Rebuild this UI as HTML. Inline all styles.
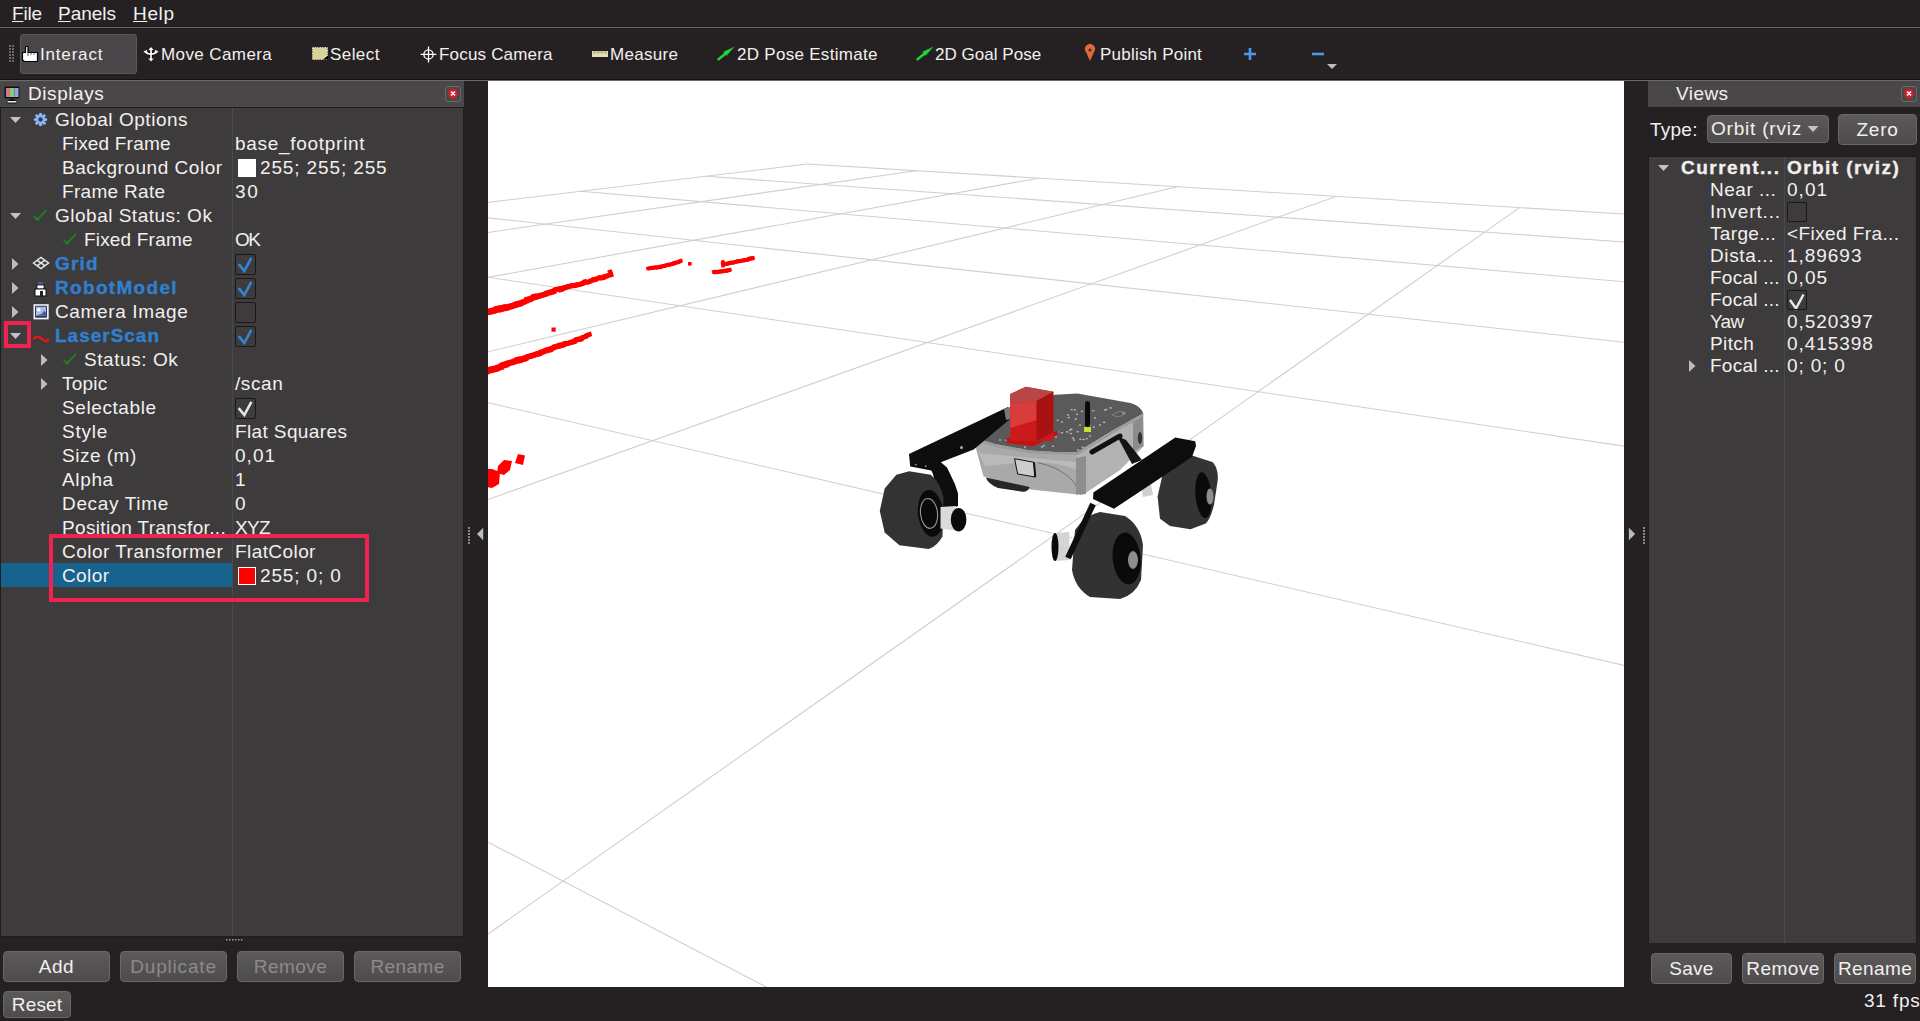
<!DOCTYPE html><html><head><meta charset="utf-8"><style>
*{margin:0;padding:0;box-sizing:border-box}
html,body{width:1920px;height:1021px;overflow:hidden;background:#252123;font-family:"Liberation Sans",sans-serif;color:#f2f0ee}
.a{position:absolute}
.t{position:absolute;white-space:nowrap;font-size:20px;line-height:24px;padding-top:1px}
.tb{position:absolute;white-space:nowrap;font-size:17.6px;line-height:20px;top:45px}
.b{font-weight:bold;-webkit-text-stroke:0.35px currentColor}
.blue{color:#3180d0}
.cb{position:absolute;width:21px;height:21px;border:1.6px solid #1a1819;border-radius:2px}
.btn{position:absolute;border:1px solid #6a6769;border-radius:4px;background:linear-gradient(#5c595b,#4e4b4d);text-align:center;font-size:20px}
.dis{color:#8d8a8b}
svg{position:absolute;overflow:visible}
</style></head><body>
<div class="t" style="font-size:19px;letter-spacing:-0.163px;left:12px;top:1px"><u>F</u>ile</div>
<div class="t" style="font-size:19px;letter-spacing:-0.030px;left:58px;top:1px"><u>P</u>anels</div>
<div class="t" style="font-size:19px;letter-spacing:0.654px;left:133px;top:1px"><u>H</u>elp</div>
<div class="a" style="left:0;top:26px;width:1920px;height:1px;background:#1d191a"></div>
<div class="a" style="left:0;top:27px;width:1920px;height:1px;background:#6f6b6c"></div>
<div class="a" style="left:0;top:28px;width:1920px;height:1px;background:#1d191a"></div>
<svg style="left:0;top:0" width="20" height="80"><rect x="9" y="45" width="2" height="2" fill="#6b686a"/><rect x="12" y="45" width="2" height="2" fill="#6b686a"/><rect x="9" y="48" width="2" height="2" fill="#6b686a"/><rect x="12" y="48" width="2" height="2" fill="#6b686a"/><rect x="9" y="51" width="2" height="2" fill="#6b686a"/><rect x="12" y="51" width="2" height="2" fill="#6b686a"/><rect x="9" y="54" width="2" height="2" fill="#6b686a"/><rect x="12" y="54" width="2" height="2" fill="#6b686a"/><rect x="9" y="57" width="2" height="2" fill="#6b686a"/><rect x="12" y="57" width="2" height="2" fill="#6b686a"/><rect x="9" y="60" width="2" height="2" fill="#6b686a"/><rect x="12" y="60" width="2" height="2" fill="#6b686a"/></svg>
<div class="a" style="left:20px;top:34px;width:117px;height:40px;background:#49464a;border:1px solid #5b585a;border-radius:3px"></div>
<div class="tb" style="font-size:17px;letter-spacing:0.819px;left:40px">Interact</div>
<div class="tb" style="font-size:17px;letter-spacing:0.402px;left:161px">Move Camera</div>
<div class="tb" style="font-size:17px;letter-spacing:0.422px;left:330px">Select</div>
<div class="tb" style="font-size:17px;letter-spacing:0.190px;left:439px">Focus Camera</div>
<div class="tb" style="font-size:17px;letter-spacing:0.309px;left:610px">Measure</div>
<div class="tb" style="font-size:17px;letter-spacing:0.289px;left:737px">2D Pose Estimate</div>
<div class="tb" style="font-size:17px;letter-spacing:0.029px;left:935px">2D Goal Pose</div>
<div class="tb" style="font-size:17px;letter-spacing:0.218px;left:1100px">Publish Point</div>
<svg style="left:0;top:0" width="1920" height="80"><path d="M25.5 46.5 h2.5 v6 h9.5 v9 h-13 l-2 -1.5 v-7.5 h3 z" fill="#fff" stroke="#000" stroke-width="1.2" stroke-linejoin="round"/><path d="M28 52.5 v3.5 M31 52.5 v2.5 M34 52.5 v2.5" stroke="#333" stroke-width="0.8"/><g stroke="#000" stroke-width="3.4" fill="none" stroke-opacity="0.8"><path d="M151 49.5 V59.5 M145 52 Q151 56.5 157 52"/></g><path d="M151 46.8 l-3.3 3.5 h6.6z M151 61.8 l-3.3 -3.5 h6.6z M142.8 51.6 l4.4 -2.2 l0.3 4.6z M159.2 51.6 l-4.4 -2.2 l-0.3 4.6z" fill="#fff" stroke="#000" stroke-width="0.8" stroke-opacity="0.6"/><g stroke="#fff" stroke-width="1.7" fill="none"><path d="M151 49.5 V59.5 M145 52 Q151 56.5 157 52"/></g><rect x="312.5" y="47.5" width="15" height="12" fill="#d8d49a" stroke="#ece8c0" stroke-dasharray="1 1.5"/><path d="M323 59.5 h5 v-4 z" fill="#000"/><g stroke="#fff" stroke-width="1.3" fill="none"><circle cx="428.5" cy="54.4" r="4.6"/><path d="M428.5 46.4 v16 M420.6 54.4 h15.8"/></g><rect x="592" y="51" width="16" height="6" fill="#e6dfb4"/><path d="M594 51v3M596 51v2M598 51v3M600 51v2M602 51v3M604 51v2M606 51v3" stroke="#8a8460" stroke-width="0.7"/><path d="M718.50 59.3 L726.00 53.2" stroke="#1ed838" stroke-width="2.4" stroke-linecap="round"/><polygon points="726.44,55.45 733.75,47.3 723.74,51.97" fill="#1ed838" stroke="#1ed838" stroke-width="0.5" stroke-linejoin="round"/><path d="M917.50 59.3 L925.00 53.2" stroke="#1ed838" stroke-width="2.4" stroke-linecap="round"/><polygon points="925.44,55.45 932.75,47.3 922.74,51.97" fill="#1ed838" stroke="#1ed838" stroke-width="0.5" stroke-linejoin="round"/><path d="M1090 61 L1086 52 A5 5 0 1 1 1094 52 Z" fill="#dc6a3f"/><circle cx="1090" cy="50" r="1.6" fill="#5a2010"/><path d="M1250 48v12M1244 54h12" stroke="#4a9ae8" stroke-width="2.6"/><path d="M1312 54h12" stroke="#4a9ae8" stroke-width="2.6"/><path d="M1327 64h10l-5 5z" fill="#bdbbbc"/></svg>
<div class="a" style="left:0;top:79px;width:1920px;height:1px;background:#161213"></div>
<div class="a" style="left:0;top:80px;width:1920px;height:1px;background:#6d6a6b"></div>
<div class="a" style="left:0;top:81px;width:464px;height:26px;background:#4a4748"></div>
<svg style="left:0;top:0" width="40" height="110"><rect x="4.5" y="86.5" width="15" height="12" fill="#111" rx="1"/><rect x="6" y="88" width="4" height="9" fill="#d07a85"/><rect x="10" y="88" width="4.5" height="9" fill="#7fcf7a"/><rect x="14.5" y="88" width="4" height="9" fill="#9aa0e8"/><rect x="10" y="99" width="4" height="2" fill="#111"/><rect x="7" y="100.5" width="10" height="2.5" rx="1" fill="#eee" stroke="#111" stroke-width="1"/></svg>
<div class="t" style="font-size:19px;letter-spacing:0.562px;left:28px;top:81px">Displays</div>
<div class="a" style="left:445px;top:86px;width:16px;height:16px;border:1px solid #6b686a;border-radius:3px;background:#4a4748"></div>
<svg style="left:0;top:0" width="470" height="110"><circle cx="453" cy="93.5" r="5" fill="#d41c26"/><path d="M451 91.5l4 4M455 91.5l-4 4" stroke="#fff" stroke-width="1.5"/></svg>
<div class="a" style="left:0;top:107px;width:464px;height:830px;background:#1e1c1d"></div>
<div class="a" style="left:1px;top:108px;width:462px;height:828px;background:#3d3b3c"></div>
<div class="a" style="left:232px;top:108px;width:1px;height:828px;background:#4a4849"></div>
<div class="a" style="left:1px;top:563px;width:231px;height:24px;background:#17628f"></div>
<div class="t " style="font-size:19px;letter-spacing:0.533px;left:55px;top:107px">Global Options</div>
<div class="t " style="font-size:19px;letter-spacing:0.182px;left:62px;top:131px">Fixed Frame</div>
<div class="t" style="font-size:19px;letter-spacing:0.709px;left:235px;top:131px">base_footprint</div>
<div class="t " style="font-size:19px;letter-spacing:0.535px;left:62px;top:155px">Background Color</div>
<div class="t" style="font-size:19px;letter-spacing:0.870px;left:260px;top:155px">255; 255; 255</div>
<div class="t " style="font-size:19px;letter-spacing:0.309px;left:62px;top:179px">Frame Rate</div>
<div class="t" style="font-size:19px;letter-spacing:1.773px;left:235px;top:179px">30</div>
<div class="t " style="font-size:19px;letter-spacing:0.499px;left:55px;top:203px">Global Status: Ok</div>
<div class="t " style="font-size:19px;letter-spacing:0.182px;left:84px;top:227px">Fixed Frame</div>
<div class="t" style="font-size:19px;letter-spacing:-1.480px;left:235px;top:227px">OK</div>
<div class="t b blue" style="font-size:19px;letter-spacing:1.216px;left:55px;top:251px">Grid</div>
<div class="t b blue" style="font-size:19px;letter-spacing:1.320px;left:55px;top:275px">RobotModel</div>
<div class="t " style="font-size:19px;letter-spacing:0.643px;left:55px;top:299px">Camera Image</div>
<div class="t b blue" style="font-size:19px;letter-spacing:0.988px;left:55px;top:323px">LaserScan</div>
<div class="t " style="font-size:19px;letter-spacing:0.560px;left:84px;top:347px">Status: Ok</div>
<div class="t " style="font-size:19px;letter-spacing:0.230px;left:62px;top:371px">Topic</div>
<div class="t" style="font-size:19px;letter-spacing:0.592px;left:235px;top:371px">/scan</div>
<div class="t " style="font-size:19px;letter-spacing:0.593px;left:62px;top:395px">Selectable</div>
<div class="t " style="font-size:19px;letter-spacing:0.743px;left:62px;top:419px">Style</div>
<div class="t" style="font-size:19px;letter-spacing:0.382px;left:235px;top:419px">Flat Squares</div>
<div class="t " style="font-size:19px;letter-spacing:0.504px;left:62px;top:443px">Size (m)</div>
<div class="t" style="font-size:19px;letter-spacing:1.035px;left:235px;top:443px">0,01</div>
<div class="t " style="font-size:19px;letter-spacing:0.647px;left:62px;top:467px">Alpha</div>
<div class="t" style="font-size:19px;letter-spacing:0.000px;left:235px;top:467px">1</div>
<div class="t " style="font-size:19px;letter-spacing:0.665px;left:62px;top:491px">Decay Time</div>
<div class="t" style="font-size:19px;letter-spacing:0.000px;left:235px;top:491px">0</div>
<div class="t " style="font-size:19px;letter-spacing:0.332px;left:62px;top:515px">Position Transfor...</div>
<div class="t" style="font-size:19px;letter-spacing:-0.646px;left:235px;top:515px">XYZ</div>
<div class="t " style="font-size:19px;letter-spacing:0.478px;left:62px;top:539px">Color Transformer</div>
<div class="t" style="font-size:19px;letter-spacing:0.421px;left:235px;top:539px">FlatColor</div>
<div class="t " style="font-size:19px;letter-spacing:0.399px;left:62px;top:563px">Color</div>
<div class="t" style="font-size:19px;letter-spacing:0.861px;left:260px;top:563px">255; 0; 0</div>
<svg style="left:0;top:0" width="470" height="940"><path d="M10 117 h11 l-5.5 6 z" fill="#c4c2c3"/><path d="M10 213 h11 l-5.5 6 z" fill="#c4c2c3"/><path d="M12 258 v12 l6.5 -6 z" fill="#bdbbbc"/><path d="M12 282 v12 l6.5 -6 z" fill="#bdbbbc"/><path d="M12 306 v12 l6.5 -6 z" fill="#bdbbbc"/><path d="M10 333 h11 l-5.5 6 z" fill="#c4c2c3"/><path d="M41 354 v12 l6.5 -6 z" fill="#bdbbbc"/><path d="M41 378 v12 l6.5 -6 z" fill="#bdbbbc"/><g fill="#8bb8ee"><circle cx="45.70" cy="119.50" r="1.6"/><circle cx="44.18" cy="123.18" r="1.6"/><circle cx="40.50" cy="124.70" r="1.6"/><circle cx="36.82" cy="123.18" r="1.6"/><circle cx="35.30" cy="119.50" r="1.6"/><circle cx="36.82" cy="115.82" r="1.6"/><circle cx="40.50" cy="114.30" r="1.6"/><circle cx="44.18" cy="115.82" r="1.6"/><circle cx="40.5" cy="119.5" r="4.6"/></g><circle cx="40.5" cy="119.5" r="2.2" fill="#23407a"/><path d="M34.3 216.7 L37.5 219.5 L46 210.5" stroke="#207c24" stroke-width="1.9" fill="none" stroke-linecap="round"/><circle cx="37.5" cy="218.9" r="1.9" fill="#207c24"/><path d="M64 240.4 L67.2 243.2 L75.7 234.2" stroke="#207c24" stroke-width="1.9" fill="none" stroke-linecap="round"/><circle cx="67.2" cy="242.6" r="1.9" fill="#207c24"/><path d="M64 360.4 L67.2 363.2 L75.7 354.2" stroke="#207c24" stroke-width="1.9" fill="none" stroke-linecap="round"/><circle cx="67.2" cy="362.6" r="1.9" fill="#207c24"/><g transform="translate(41 263)" stroke="#e8e8e8" stroke-width="1.5" fill="none"><path d="M-7.5 0 L0 -5.5 L7.5 0 L0 5.5 Z"/><path d="M-3.7 -2.7 L3.7 2.7 M3.7 -2.7 L-3.7 2.7"/></g><g transform="translate(33 281)"><rect x="5" y="1" width="5" height="3" fill="#4455aa"/><rect x="4" y="4" width="7" height="4" fill="#fff" stroke="#111" stroke-width="0.8"/><rect x="2" y="8" width="11" height="7" fill="#fff" stroke="#111" stroke-width="1"/><rect x="7" y="10" width="3" height="5" fill="#222"/></g><g><rect x="33.5" y="304.2" width="15.2" height="15.2" fill="#f4f4f4"/><rect x="35" y="305.8" width="12" height="12" rx="1" fill="#2a3a78"/><rect x="36" y="306.8" width="10" height="9" fill="#a8bce0"/><circle cx="38.8" cy="309.7" r="1.8" fill="#fff"/><path d="M36 315.8 h10 v-3 l-2 -2 l-2 3 z" fill="#4a5c98"/></g><path d="M34 338.5 q2.5 -2.5 5 -1.5 l5 3.5 q2.5 1.5 4 -1" stroke="#e81515" stroke-width="2.6" fill="none" stroke-linecap="round"/></svg>
<div class="cb" style="left:235px;top:254px"></div>
<svg style="left:0;top:0" width="300" height="600"><path d="M238.7 264.2 L244.3 271 L251.4 257.8" stroke="#3585d8" stroke-width="2.6" fill="none"/></svg>
<div class="cb" style="left:235px;top:278px"></div>
<svg style="left:0;top:0" width="300" height="600"><path d="M238.7 288.2 L244.3 295 L251.4 281.8" stroke="#3585d8" stroke-width="2.6" fill="none"/></svg>
<div class="cb" style="left:235px;top:302px"></div>
<div class="cb" style="left:235px;top:326px"></div>
<svg style="left:0;top:0" width="300" height="600"><path d="M238.7 336.2 L244.3 343 L251.4 329.8" stroke="#3585d8" stroke-width="2.6" fill="none"/></svg>
<div class="cb" style="left:235px;top:398px"></div>
<svg style="left:0;top:0" width="300" height="600"><path d="M238.7 408.2 L244.3 415 L251.4 401.8" stroke="#e6e6e6" stroke-width="2.6" fill="none"/></svg>
<div class="a" style="left:238px;top:159px;width:18px;height:18px;background:#fff"></div>
<div class="a" style="left:238px;top:567px;width:18px;height:18px;background:#f00;border:1.5px solid #fff"></div>
<div class="a" style="left:4px;top:321px;width:27px;height:27px;border:4px solid #f02350"></div>
<div class="a" style="left:49px;top:534px;width:320px;height:68px;border:4px solid #f02350"></div>
<svg style="left:0;top:0" width="480" height="950"><g fill="#9a9899"><rect x="226" y="939" width="1.5" height="1.5"/><rect x="229" y="939" width="1.5" height="1.5"/><rect x="232" y="939" width="1.5" height="1.5"/><rect x="235" y="939" width="1.5" height="1.5"/><rect x="238" y="939" width="1.5" height="1.5"/><rect x="241" y="939" width="1.5" height="1.5"/></g><g fill="#8a8889"><rect x="468" y="527" width="2" height="2"/><rect x="468" y="530" width="2" height="2"/><rect x="468" y="533" width="2" height="2"/><rect x="468" y="536" width="2" height="2"/><rect x="468" y="539" width="2" height="2"/><rect x="468" y="542" width="2" height="2"/></g><path d="M483.2 527.8 v12.4 l-6.2 -6.2z" fill="#bdbbbc"/></svg>
<svg style="left:488px;top:81px;background:#fff;overflow:hidden" width="1136" height="906"><g stroke="#cfcfd1" stroke-width="1.1"><line x1="319.2" y1="83.0" x2="2646.1" y2="225.4"/><line x1="319.2" y1="83.0" x2="-36297.6" y2="4490.5"/><line x1="218.3" y1="95.2" x2="3041.4" y2="297.7"/><line x1="427.9" y1="89.7" x2="-632888.9" y2="91471.9"/><line x1="93.0" y1="110.3" x2="3749.9" y2="427.3"/><line x1="550.3" y1="97.2" x2="-506838.8" y2="91471.9"/><line x1="-66.9" y1="129.5" x2="5388.1" y2="726.9"/><line x1="689.2" y1="105.7" x2="-380788.6" y2="91471.9"/><line x1="-278.0" y1="154.9" x2="13277.6" y2="2169.8"/><line x1="848.0" y1="115.4" x2="-254738.5" y2="91471.9"/><line x1="-569.3" y1="190.0" x2="394124.8" y2="91471.9"/><line x1="1031.5" y1="126.6" x2="-128688.3" y2="91471.9"/><line x1="-997.6" y1="241.5" x2="174176.2" y2="91471.9"/><line x1="1245.8" y1="139.7" x2="-2638.1" y2="91471.9"/><line x1="-1689.0" y1="324.7" x2="-45772.5" y2="91471.9"/><line x1="1499.5" y1="155.3" x2="123412.0" y2="91471.9"/><line x1="-2993.6" y1="481.8" x2="-265721.1" y2="91471.9"/><line x1="1804.4" y1="173.9" x2="249462.2" y2="91471.9"/><line x1="-6377.3" y1="889.1" x2="-485669.7" y2="91471.9"/><line x1="2177.9" y1="196.8" x2="375512.3" y2="91471.9"/><line x1="-36297.6" y1="4490.5" x2="-705618.3" y2="91471.9"/><line x1="2646.1" y1="225.4" x2="501562.5" y2="91471.9"/></g><g transform="translate(-488 -81)" fill="#ff0000">
<rect x="482.9" y="309.0" width="6.2" height="6.2" transform="rotate(-15 486.0 312.5)"/>
<rect x="485.0" y="309.0" width="6.2" height="6.2" transform="rotate(-15 488.1 312.0)"/>
<rect x="487.1" y="308.2" width="6.1" height="6.1" transform="rotate(-15 490.2 311.5)"/>
<rect x="489.2" y="308.0" width="6.1" height="6.1" transform="rotate(-15 492.3 310.9)"/>
<rect x="491.3" y="307.6" width="6.1" height="6.1" transform="rotate(-15 494.4 310.4)"/>
<rect x="493.4" y="306.2" width="6.0" height="6.0" transform="rotate(-15 496.4 309.9)"/>
<rect x="495.5" y="305.6" width="6.0" height="6.0" transform="rotate(-15 498.5 309.4)"/>
<rect x="497.5" y="306.4" width="6.0" height="6.0" transform="rotate(-15 500.5 308.9)"/>
<rect x="499.6" y="305.0" width="5.9" height="5.9" transform="rotate(-15 502.5 308.3)"/>
<rect x="501.6" y="304.4" width="5.9" height="5.9" transform="rotate(-15 504.5 307.8)"/>
<rect x="503.6" y="305.1" width="5.9" height="5.9" transform="rotate(-15 506.5 307.3)"/>
<rect x="505.6" y="303.8" width="5.8" height="5.8" transform="rotate(-15 508.5 306.7)"/>
<rect x="507.6" y="303.9" width="5.8" height="5.8" transform="rotate(-15 510.5 306.2)"/>
<rect x="509.6" y="302.8" width="5.8" height="5.8" transform="rotate(-15 512.5 305.7)"/>
<rect x="511.5" y="302.5" width="5.8" height="5.8" transform="rotate(-15 514.4 305.2)"/>
<rect x="513.5" y="301.2" width="5.7" height="5.7" transform="rotate(-15 516.4 304.7)"/>
<rect x="515.4" y="301.4" width="5.7" height="5.7" transform="rotate(-15 518.2 304.0)"/>
<rect x="517.2" y="301.0" width="5.7" height="5.7" transform="rotate(-15 520.1 303.2)"/>
<rect x="519.1" y="299.7" width="5.6" height="5.6" transform="rotate(-15 521.9 302.5)"/>
<rect x="520.9" y="299.3" width="5.6" height="5.6" transform="rotate(-15 523.7 301.7)"/>
<rect x="522.7" y="298.4" width="5.6" height="5.6" transform="rotate(-15 525.5 300.9)"/>
<rect x="524.6" y="296.7" width="5.5" height="5.5" transform="rotate(-15 527.3 300.2)"/>
<rect x="526.4" y="297.1" width="5.5" height="5.5" transform="rotate(-15 529.1 299.4)"/>
<rect x="528.2" y="296.1" width="5.5" height="5.5" transform="rotate(-15 530.9 298.7)"/>
<rect x="529.9" y="294.9" width="5.5" height="5.5" transform="rotate(-15 532.7 298.0)"/>
<rect x="531.7" y="293.8" width="5.4" height="5.4" transform="rotate(-15 534.4 297.2)"/>
<rect x="533.5" y="294.5" width="5.4" height="5.4" transform="rotate(-15 536.2 296.6)"/>
<rect x="535.3" y="293.3" width="5.4" height="5.4" transform="rotate(-15 538.0 296.0)"/>
<rect x="537.1" y="293.1" width="5.3" height="5.3" transform="rotate(-15 539.8 295.4)"/>
<rect x="538.9" y="292.8" width="5.3" height="5.3" transform="rotate(-15 541.6 294.9)"/>
<rect x="540.7" y="292.0" width="5.3" height="5.3" transform="rotate(-15 543.3 294.3)"/>
<rect x="542.5" y="291.8" width="5.2" height="5.2" transform="rotate(-15 545.1 293.7)"/>
<rect x="544.2" y="290.4" width="5.2" height="5.2" transform="rotate(-15 546.8 293.2)"/>
<rect x="546.0" y="290.5" width="5.2" height="5.2" transform="rotate(-15 548.6 292.6)"/>
<rect x="547.7" y="289.4" width="5.2" height="5.2" transform="rotate(-15 550.3 292.0)"/>
<rect x="549.5" y="289.6" width="5.1" height="5.1" transform="rotate(-15 552.0 291.5)"/>
<rect x="551.2" y="289.0" width="5.1" height="5.1" transform="rotate(-15 553.7 290.9)"/>
<rect x="552.9" y="287.2" width="5.1" height="5.1" transform="rotate(-15 555.4 290.4)"/>
<rect x="554.6" y="286.8" width="5.1" height="5.1" transform="rotate(-15 557.2 289.9)"/>
<rect x="556.3" y="286.5" width="5.0" height="5.0" transform="rotate(-15 558.9 289.4)"/>
<rect x="558.1" y="287.2" width="5.0" height="5.0" transform="rotate(-15 560.6 288.9)"/>
<rect x="559.8" y="285.9" width="5.0" height="5.0" transform="rotate(-15 562.2 288.5)"/>
<rect x="561.4" y="285.7" width="4.9" height="4.9" transform="rotate(-15 563.9 288.0)"/>
<rect x="563.1" y="284.8" width="4.9" height="4.9" transform="rotate(-15 565.6 287.5)"/>
<rect x="564.8" y="284.6" width="4.9" height="4.9" transform="rotate(-15 567.2 287.1)"/>
<rect x="566.5" y="284.0" width="4.9" height="4.9" transform="rotate(-15 568.9 286.6)"/>
<rect x="568.1" y="283.5" width="4.8" height="4.8" transform="rotate(-15 570.5 286.1)"/>
<rect x="569.8" y="283.4" width="4.8" height="4.8" transform="rotate(-15 572.2 285.7)"/>
<rect x="571.4" y="283.0" width="4.8" height="4.8" transform="rotate(-15 573.8 285.2)"/>
<rect x="573.0" y="283.1" width="4.8" height="4.8" transform="rotate(-15 575.4 284.8)"/>
<rect x="574.6" y="282.3" width="4.7" height="4.7" transform="rotate(-15 577.0 284.3)"/>
<rect x="576.3" y="282.2" width="4.7" height="4.7" transform="rotate(-15 578.6 283.9)"/>
<rect x="577.9" y="281.7" width="4.7" height="4.7" transform="rotate(-15 580.2 283.4)"/>
<rect x="579.5" y="281.5" width="4.7" height="4.7" transform="rotate(-15 581.8 283.0)"/>
<rect x="581.0" y="280.5" width="4.6" height="4.6" transform="rotate(-15 583.4 282.6)"/>
<rect x="582.6" y="279.3" width="4.6" height="4.6" transform="rotate(-15 584.9 282.2)"/>
<rect x="584.2" y="280.0" width="4.6" height="4.6" transform="rotate(-15 586.5 281.7)"/>
<rect x="585.7" y="279.8" width="4.6" height="4.6" transform="rotate(-15 588.0 281.3)"/>
<rect x="587.3" y="279.3" width="4.5" height="4.5" transform="rotate(-15 589.6 280.9)"/>
<rect x="588.8" y="278.3" width="4.5" height="4.5" transform="rotate(-15 591.1 280.5)"/>
<rect x="590.4" y="278.1" width="4.5" height="4.5" transform="rotate(-15 592.6 280.0)"/>
<rect x="591.9" y="276.9" width="4.5" height="4.5" transform="rotate(-15 594.1 279.6)"/>
<rect x="593.4" y="277.5" width="4.4" height="4.4" transform="rotate(-15 595.7 279.2)"/>
<rect x="594.9" y="276.7" width="4.4" height="4.4" transform="rotate(-15 597.1 278.8)"/>
<rect x="596.4" y="275.8" width="4.4" height="4.4" transform="rotate(-15 598.6 278.4)"/>
<rect x="597.9" y="275.1" width="4.4" height="4.4" transform="rotate(-15 600.1 278.0)"/>
<rect x="599.4" y="276.0" width="4.3" height="4.3" transform="rotate(-15 601.6 277.6)"/>
<rect x="600.9" y="275.8" width="4.3" height="4.3" transform="rotate(-15 603.1 277.2)"/>
<rect x="602.4" y="274.0" width="4.3" height="4.3" transform="rotate(-15 604.5 276.8)"/>
<rect x="603.8" y="274.7" width="4.3" height="4.3" transform="rotate(-15 606.0 276.4)"/>
<rect x="605.3" y="273.7" width="4.3" height="4.3" transform="rotate(-15 607.4 276.0)"/>
<rect x="606.7" y="272.9" width="4.2" height="4.2" transform="rotate(-15 608.9 275.6)"/>
<rect x="608.2" y="272.8" width="4.2" height="4.2" transform="rotate(-15 610.3 275.2)"/>
<rect x="607.8" y="269.8" width="4.5" height="4.5" transform="rotate(-15 610.0 272.0)"/>
<rect x="608.3" y="271.2" width="4.5" height="4.5" transform="rotate(-15 610.6 273.5)"/>
<rect x="608.9" y="272.7" width="4.5" height="4.5" transform="rotate(-15 611.1 274.9)"/>
<rect x="482.9" y="368.6" width="6.2" height="6.2" transform="rotate(-15 486.0 371.5)"/>
<rect x="485.0" y="367.0" width="6.2" height="6.2" transform="rotate(-15 488.1 370.8)"/>
<rect x="487.0" y="367.4" width="6.1" height="6.1" transform="rotate(-15 490.1 370.1)"/>
<rect x="489.1" y="366.1" width="6.1" height="6.1" transform="rotate(-15 492.1 369.4)"/>
<rect x="491.1" y="366.3" width="6.1" height="6.1" transform="rotate(-15 494.1 368.7)"/>
<rect x="493.1" y="365.8" width="6.0" height="6.0" transform="rotate(-15 496.2 368.0)"/>
<rect x="495.2" y="364.3" width="6.0" height="6.0" transform="rotate(-15 498.2 367.3)"/>
<rect x="497.2" y="364.5" width="6.0" height="6.0" transform="rotate(-15 500.1 366.7)"/>
<rect x="499.2" y="362.7" width="5.9" height="5.9" transform="rotate(-15 502.1 366.0)"/>
<rect x="501.1" y="361.7" width="5.9" height="5.9" transform="rotate(-15 504.1 365.3)"/>
<rect x="503.1" y="361.9" width="5.9" height="5.9" transform="rotate(-15 506.0 364.6)"/>
<rect x="505.1" y="360.3" width="5.8" height="5.8" transform="rotate(-15 508.0 364.0)"/>
<rect x="507.0" y="359.9" width="5.8" height="5.8" transform="rotate(-15 509.9 363.3)"/>
<rect x="508.9" y="359.6" width="5.8" height="5.8" transform="rotate(-15 511.8 362.6)"/>
<rect x="510.9" y="359.2" width="5.7" height="5.7" transform="rotate(-15 513.7 361.9)"/>
<rect x="512.8" y="357.9" width="5.7" height="5.7" transform="rotate(-15 515.6 361.3)"/>
<rect x="514.7" y="357.0" width="5.7" height="5.7" transform="rotate(-15 517.5 360.6)"/>
<rect x="516.6" y="357.7" width="5.7" height="5.7" transform="rotate(-15 519.4 360.0)"/>
<rect x="518.5" y="356.2" width="5.6" height="5.6" transform="rotate(-15 521.3 359.3)"/>
<rect x="520.3" y="356.6" width="5.6" height="5.6" transform="rotate(-15 523.1 358.7)"/>
<rect x="522.2" y="355.9" width="5.6" height="5.6" transform="rotate(-15 525.0 358.0)"/>
<rect x="524.1" y="354.4" width="5.5" height="5.5" transform="rotate(-15 526.8 357.4)"/>
<rect x="525.9" y="353.9" width="5.5" height="5.5" transform="rotate(-15 528.6 356.7)"/>
<rect x="527.7" y="353.4" width="5.5" height="5.5" transform="rotate(-15 530.5 356.1)"/>
<rect x="529.6" y="353.0" width="5.4" height="5.4" transform="rotate(-15 532.3 355.5)"/>
<rect x="531.4" y="352.3" width="5.4" height="5.4" transform="rotate(-15 534.1 354.8)"/>
<rect x="533.2" y="351.6" width="5.4" height="5.4" transform="rotate(-15 535.9 354.2)"/>
<rect x="535.0" y="351.1" width="5.4" height="5.4" transform="rotate(-15 537.6 353.6)"/>
<rect x="536.7" y="351.0" width="5.3" height="5.3" transform="rotate(-15 539.4 353.0)"/>
<rect x="538.5" y="349.7" width="5.3" height="5.3" transform="rotate(-15 541.2 352.3)"/>
<rect x="540.3" y="349.0" width="5.3" height="5.3" transform="rotate(-15 542.9 351.7)"/>
<rect x="542.0" y="348.8" width="5.2" height="5.2" transform="rotate(-15 544.7 351.1)"/>
<rect x="543.8" y="347.5" width="5.2" height="5.2" transform="rotate(-15 546.4 350.5)"/>
<rect x="545.5" y="347.0" width="5.2" height="5.2" transform="rotate(-15 548.1 349.9)"/>
<rect x="547.2" y="347.4" width="5.2" height="5.2" transform="rotate(-15 549.8 349.2)"/>
<rect x="548.9" y="346.1" width="5.1" height="5.1" transform="rotate(-15 551.5 348.6)"/>
<rect x="550.6" y="345.5" width="5.1" height="5.1" transform="rotate(-15 553.2 348.0)"/>
<rect x="552.3" y="344.1" width="5.1" height="5.1" transform="rotate(-15 554.9 347.4)"/>
<rect x="554.0" y="344.2" width="5.0" height="5.0" transform="rotate(-15 556.6 346.8)"/>
<rect x="555.7" y="343.9" width="5.0" height="5.0" transform="rotate(-15 558.2 346.3)"/>
<rect x="557.4" y="342.5" width="5.0" height="5.0" transform="rotate(-15 559.9 345.8)"/>
<rect x="559.1" y="342.9" width="5.0" height="5.0" transform="rotate(-15 561.6 345.2)"/>
<rect x="560.8" y="342.5" width="4.9" height="4.9" transform="rotate(-15 563.2 344.7)"/>
<rect x="562.4" y="341.0" width="4.9" height="4.9" transform="rotate(-15 564.9 344.2)"/>
<rect x="564.1" y="341.4" width="4.9" height="4.9" transform="rotate(-15 566.5 343.7)"/>
<rect x="565.7" y="340.7" width="4.9" height="4.9" transform="rotate(-15 568.2 343.2)"/>
<rect x="567.4" y="340.5" width="4.8" height="4.8" transform="rotate(-15 569.8 342.6)"/>
<rect x="569.0" y="339.5" width="4.8" height="4.8" transform="rotate(-15 571.4 342.1)"/>
<rect x="570.6" y="339.6" width="4.8" height="4.8" transform="rotate(-15 573.0 341.6)"/>
<rect x="572.2" y="339.1" width="4.8" height="4.8" transform="rotate(-15 574.6 341.1)"/>
<rect x="573.8" y="337.4" width="4.7" height="4.7" transform="rotate(-15 576.1 340.5)"/>
<rect x="575.3" y="336.8" width="4.7" height="4.7" transform="rotate(-15 577.7 339.8)"/>
<rect x="576.8" y="337.1" width="4.7" height="4.7" transform="rotate(-15 579.2 339.2)"/>
<rect x="578.4" y="337.0" width="4.7" height="4.7" transform="rotate(-15 580.7 338.5)"/>
<rect x="579.9" y="335.2" width="4.6" height="4.6" transform="rotate(-15 582.2 337.9)"/>
<rect x="581.4" y="334.9" width="4.6" height="4.6" transform="rotate(-15 583.7 337.2)"/>
<rect x="582.9" y="334.5" width="4.6" height="4.6" transform="rotate(-15 585.1 336.6)"/>
<rect x="584.3" y="333.4" width="4.6" height="4.6" transform="rotate(-15 586.6 336.0)"/>
<rect x="585.8" y="332.8" width="4.5" height="4.5" transform="rotate(-15 588.1 335.3)"/>
<rect x="587.3" y="332.1" width="4.5" height="4.5" transform="rotate(-15 589.5 334.7)"/>
<rect x="551.5" y="327.5" width="4.2" height="4.2"/>
<rect x="646.2" y="266.6" width="3.6" height="3.6" transform="rotate(-15 648.0 268.5)"/>
<rect x="647.4" y="266.6" width="3.6" height="3.6" transform="rotate(-15 649.3 268.3)"/>
<rect x="648.7" y="266.2" width="3.6" height="3.6" transform="rotate(-15 650.5 268.2)"/>
<rect x="649.9" y="266.1" width="3.6" height="3.6" transform="rotate(-15 651.8 268.0)"/>
<rect x="651.2" y="266.3" width="3.6" height="3.6" transform="rotate(-15 653.0 267.9)"/>
<rect x="652.5" y="265.5" width="3.6" height="3.6" transform="rotate(-15 654.3 267.7)"/>
<rect x="653.7" y="265.8" width="3.6" height="3.6" transform="rotate(-15 655.5 267.6)"/>
<rect x="655.0" y="265.8" width="3.7" height="3.7" transform="rotate(-15 656.8 267.4)"/>
<rect x="656.2" y="265.3" width="3.7" height="3.7" transform="rotate(-15 658.1 267.2)"/>
<rect x="657.5" y="265.0" width="3.7" height="3.7" transform="rotate(-15 659.3 267.1)"/>
<rect x="658.8" y="265.3" width="3.7" height="3.7" transform="rotate(-15 660.6 266.8)"/>
<rect x="660.0" y="264.5" width="3.7" height="3.7" transform="rotate(-15 661.9 266.5)"/>
<rect x="661.3" y="264.1" width="3.7" height="3.7" transform="rotate(-15 663.1 266.2)"/>
<rect x="662.5" y="264.0" width="3.7" height="3.7" transform="rotate(-15 664.4 265.9)"/>
<rect x="663.8" y="263.9" width="3.7" height="3.7" transform="rotate(-15 665.6 265.6)"/>
<rect x="665.0" y="263.1" width="3.7" height="3.7" transform="rotate(-15 666.9 265.3)"/>
<rect x="666.3" y="263.0" width="3.7" height="3.7" transform="rotate(-15 668.1 265.0)"/>
<rect x="667.5" y="262.7" width="3.7" height="3.7" transform="rotate(-15 669.4 264.7)"/>
<rect x="668.8" y="262.7" width="3.7" height="3.7" transform="rotate(-15 670.7 264.3)"/>
<rect x="670.1" y="262.1" width="3.7" height="3.7" transform="rotate(-15 671.9 264.0)"/>
<rect x="671.3" y="262.0" width="3.8" height="3.8" transform="rotate(-15 673.2 263.6)"/>
<rect x="672.5" y="261.0" width="3.8" height="3.8" transform="rotate(-15 674.4 263.2)"/>
<rect x="673.8" y="260.8" width="3.8" height="3.8" transform="rotate(-15 675.7 262.8)"/>
<rect x="675.0" y="260.6" width="3.8" height="3.8" transform="rotate(-15 676.9 262.4)"/>
<rect x="676.3" y="260.4" width="3.8" height="3.8" transform="rotate(-15 678.2 261.9)"/>
<rect x="677.5" y="259.6" width="3.8" height="3.8" transform="rotate(-15 679.4 261.5)"/>
<rect x="678.8" y="259.0" width="3.8" height="3.8" transform="rotate(-15 680.7 261.1)"/>
<rect x="688" y="262" width="3.6" height="3.6"/>
<rect x="721.1" y="262.3" width="3.8" height="3.8" transform="rotate(-15 723.0 264.5)"/>
<rect x="722.4" y="262.4" width="3.8" height="3.8" transform="rotate(-15 724.3 264.2)"/>
<rect x="723.7" y="261.8" width="3.8" height="3.8" transform="rotate(-15 725.6 264.0)"/>
<rect x="725.0" y="262.0" width="3.8" height="3.8" transform="rotate(-15 726.9 263.7)"/>
<rect x="726.3" y="261.8" width="3.8" height="3.8" transform="rotate(-15 728.2 263.4)"/>
<rect x="727.6" y="261.0" width="3.8" height="3.8" transform="rotate(-15 729.5 263.1)"/>
<rect x="728.9" y="260.8" width="3.8" height="3.8" transform="rotate(-15 730.8 262.9)"/>
<rect x="730.2" y="260.9" width="3.8" height="3.8" transform="rotate(-15 732.1 262.6)"/>
<rect x="731.5" y="260.5" width="3.8" height="3.8" transform="rotate(-15 733.4 262.3)"/>
<rect x="732.8" y="260.4" width="3.8" height="3.8" transform="rotate(-15 734.7 262.1)"/>
<rect x="734.1" y="259.8" width="3.8" height="3.8" transform="rotate(-15 736.0 261.8)"/>
<rect x="735.4" y="259.4" width="3.8" height="3.8" transform="rotate(-15 737.3 261.6)"/>
<rect x="736.7" y="259.3" width="3.8" height="3.8" transform="rotate(-15 738.6 261.3)"/>
<rect x="738.1" y="259.4" width="3.8" height="3.8" transform="rotate(-15 740.0 261.1)"/>
<rect x="739.4" y="258.8" width="3.8" height="3.8" transform="rotate(-15 741.3 260.9)"/>
<rect x="740.7" y="258.6" width="3.8" height="3.8" transform="rotate(-15 742.6 260.6)"/>
<rect x="742.0" y="258.4" width="3.8" height="3.8" transform="rotate(-15 743.9 260.4)"/>
<rect x="743.3" y="258.2" width="3.8" height="3.8" transform="rotate(-15 745.2 260.1)"/>
<rect x="744.6" y="257.9" width="3.8" height="3.8" transform="rotate(-15 746.5 259.9)"/>
<rect x="745.8" y="257.9" width="3.8" height="3.8" transform="rotate(-15 747.7 259.5)"/>
<rect x="747.1" y="256.9" width="3.8" height="3.8" transform="rotate(-15 749.0 259.1)"/>
<rect x="748.4" y="256.4" width="3.8" height="3.8" transform="rotate(-15 750.3 258.7)"/>
<rect x="749.7" y="256.7" width="3.8" height="3.8" transform="rotate(-15 751.6 258.3)"/>
<rect x="750.9" y="256.3" width="3.8" height="3.8" transform="rotate(-15 752.8 257.9)"/>
<rect x="721.2" y="260.2" width="3.5" height="3.5" transform="rotate(-15 723.0 262.0)"/>
<rect x="721.2" y="261.5" width="3.5" height="3.5" transform="rotate(-15 723.0 263.2)"/>
<rect x="721.2" y="262.7" width="3.5" height="3.5" transform="rotate(-15 723.0 264.4)"/>
<rect x="721.2" y="263.9" width="3.5" height="3.5" transform="rotate(-15 723.0 265.7)"/>
<rect x="712.1" y="269.9" width="3.8" height="3.8" transform="rotate(-15 714.0 272.0)"/>
<rect x="713.4" y="270.2" width="3.8" height="3.8" transform="rotate(-15 715.3 271.9)"/>
<rect x="714.8" y="270.1" width="3.8" height="3.8" transform="rotate(-15 716.7 271.8)"/>
<rect x="716.1" y="269.9" width="3.8" height="3.8" transform="rotate(-15 718.0 271.8)"/>
<rect x="717.4" y="269.8" width="3.8" height="3.8" transform="rotate(-15 719.3 271.7)"/>
<rect x="718.7" y="269.6" width="3.8" height="3.8" transform="rotate(-15 720.6 271.6)"/>
<rect x="720.1" y="269.5" width="3.8" height="3.8" transform="rotate(-15 722.0 271.5)"/>
<rect x="721.4" y="269.2" width="3.8" height="3.8" transform="rotate(-15 723.3 271.3)"/>
<rect x="722.7" y="268.9" width="3.8" height="3.8" transform="rotate(-15 724.6 271.0)"/>
<rect x="724.0" y="268.9" width="3.8" height="3.8" transform="rotate(-15 725.9 270.8)"/>
<rect x="725.3" y="268.5" width="3.8" height="3.8" transform="rotate(-15 727.2 270.5)"/>
<rect x="726.6" y="268.6" width="3.8" height="3.8" transform="rotate(-15 728.5 270.3)"/>
<rect x="727.9" y="267.9" width="3.8" height="3.8" transform="rotate(-15 729.8 270.0)"/>
<polygon points="518,454 525,455.5 523,465 515,463"/>
<polygon points="498,466 504,460 512,461 510,470 504,475 497,473"/>
<polygon points="487,469 492,469 500,472 499,484 492,488 487,487"/>
</g><g transform="translate(-488 -81)">
<!-- rear right wheel -->
<path d="M1157.6 496.4 L1163.5 470.5 Q1175 458 1192.9 455.8 L1212.9 462.3 Q1219 470 1217.6 481.1 L1214 505 Q1210 520 1205.8 523.4 L1190.5 529.3 L1170 526 L1160 518.7 Z" fill="#343434"/>
<ellipse cx="1203.5" cy="495.2" rx="8" ry="23" transform="rotate(-5 1203.5 495.2)" fill="#0a0a0a"/>
<ellipse cx="1210" cy="496.5" rx="3.5" ry="8" fill="#8e8e8e"/>
<!-- motor behind rear-right -->
<polygon points="1141,486 1151,484 1153,495 1143,497" fill="#cfcfcf"/>
<!-- body right face -->
<polygon points="1077.5,452 1143.3,415.3 1144,446 1120,470 1083.4,494.6 1077.5,494.6" fill="#b2b2b2"/>
<polygon points="1133,421 1143,416 1143,446 1133,452" fill="#8c8c8c"/><ellipse cx="1140" cy="438" rx="2.2" ry="6" fill="#333"/>
<!-- body front face -->
<path d="M974.1 437.6 L1077.5 452 L1077.5 494.6 L1028 489.3 L983.5 476.4 L976.5 450.5 Z" fill="#a9a9a9"/>
<path d="M978.8 452.9 L1076.3 462.3 L1077 470 Q1060 462 1030 462 L985 466 Z" fill="#c2c2c2" opacity="0.7"/>
<path d="M1038 462.7 Q1072 470 1080.7 494.9" fill="none" stroke="#6a6a6a" stroke-width="0.9"/>
<polygon points="1076,458 1086,456 1086,494 1076,494.5" fill="#8e8e8e"/>
<!-- underside -->
<path d="M985.9 477.6 L1029.7 487 Q1028 492 1022.7 491.7 L998 488 Q988 484 985.9 477.6 Z" fill="#262626"/>
<!-- front window -->
<polygon points="1014.6,458.7 1034,462.3 1035.2,477 1017.6,474" fill="#cdcdcd" stroke="#111" stroke-width="1"/>
<path d="M1034 462.3 L1035.2 477" stroke="#111" stroke-width="2"/>
<!-- plate top -->
<path d="M974.1 437.6 L1007 408.2 L1055 394.7 L1077.5 393.5 L1130.4 402.9 Q1141 406 1143.3 413.5 L1112.8 430.5 L1077.5 451.9 L1059.9 452.3 L1030.5 450.5 L995.3 444 Z" fill="#5a5a5a"/>
<path d="M974.1 437.6 L995.3 444 L1030.5 450.5 L1059.9 452.3 L1077.5 451.9 L1112.8 430.5 L1143.3 413.5 L1143.3 416.5 L1112.8 433.5 L1077.5 455 L1030.5 453.5 L995.3 447 L974.1 440.6 Z" fill="#9c9c9c"/>
<g fill="#a8a8a8">
<circle cx="1070" cy="430" r="1.1"/><circle cx="1080" cy="425" r="1.1"/><circle cx="1062" cy="422" r="1.1"/><circle cx="1095" cy="418" r="1.1"/><circle cx="1075" cy="410" r="1.1"/><circle cx="1105" cy="410" r="1.1"/><circle cx="1090" cy="436" r="1.1"/><circle cx="1056" cy="437" r="1.1"/><circle cx="1000" cy="440" r="1.1"/><circle cx="1042" cy="447" r="1.1"/><circle cx="1068" cy="415" r="1.1"/><circle cx="1088" cy="412" r="1.1"/><circle cx="1100" cy="425" r="1.1"/><circle cx="1058" cy="432" r="1.1"/><circle cx="1074" cy="440" r="1.1"/><circle cx="1025" cy="447" r="1.1"/><circle cx="1020" cy="430" r="1.1"/>
</g>
<ellipse cx="1052.9" cy="446.2" rx="1.3" ry="0.8" fill="#b8b8b8"/><ellipse cx="1062.0" cy="432.7" rx="1.3" ry="0.8" fill="#b8b8b8"/><ellipse cx="1006.4" cy="440.3" rx="1.3" ry="0.8" fill="#b8b8b8"/><ellipse cx="1081.9" cy="411.2" rx="1.3" ry="0.8" fill="#b8b8b8"/><ellipse cx="1106.2" cy="409.5" rx="1.3" ry="0.8" fill="#b8b8b8"/><ellipse cx="1067.3" cy="431.9" rx="1.3" ry="0.8" fill="#b8b8b8"/><ellipse cx="1078.0" cy="450.0" rx="1.3" ry="0.8" fill="#b8b8b8"/><ellipse cx="1083.6" cy="439.5" rx="1.3" ry="0.8" fill="#b8b8b8"/><ellipse cx="1071.7" cy="409.8" rx="1.3" ry="0.8" fill="#b8b8b8"/><ellipse cx="1070.9" cy="433.6" rx="1.3" ry="0.8" fill="#b8b8b8"/><ellipse cx="1043.9" cy="445.7" rx="1.3" ry="0.8" fill="#b8b8b8"/><ellipse cx="1077.7" cy="431.8" rx="1.3" ry="0.8" fill="#b8b8b8"/><ellipse cx="1057.7" cy="420.2" rx="1.3" ry="0.8" fill="#b8b8b8"/><ellipse cx="1104.2" cy="422.4" rx="1.3" ry="0.8" fill="#b8b8b8"/><ellipse cx="1093.2" cy="410.8" rx="1.3" ry="0.8" fill="#b8b8b8"/><ellipse cx="1073.0" cy="438.1" rx="1.3" ry="0.8" fill="#b8b8b8"/><ellipse cx="1082.8" cy="447.3" rx="1.3" ry="0.8" fill="#b8b8b8"/><ellipse cx="1077.0" cy="414.2" rx="1.3" ry="0.8" fill="#b8b8b8"/><ellipse cx="1093.8" cy="427.0" rx="1.3" ry="0.8" fill="#b8b8b8"/><ellipse cx="1086.6" cy="438.7" rx="1.3" ry="0.8" fill="#b8b8b8"/><ellipse cx="1089.5" cy="425.2" rx="1.3" ry="0.8" fill="#b8b8b8"/><ellipse cx="1071.3" cy="429.4" rx="1.3" ry="0.8" fill="#b8b8b8"/><ellipse cx="1123.4" cy="413.3" rx="1.3" ry="0.8" fill="#b8b8b8"/><ellipse cx="1075.7" cy="419.1" rx="1.3" ry="0.8" fill="#b8b8b8"/><ellipse cx="1110.6" cy="407.9" rx="1.3" ry="0.8" fill="#b8b8b8"/><ellipse cx="1080.3" cy="439.3" rx="1.3" ry="0.8" fill="#b8b8b8"/><ellipse cx="1068.8" cy="417.6" rx="1.3" ry="0.8" fill="#b8b8b8"/><path d="M1112 415 q8 -6 14 -2 q-6 6 -14 2z" fill="none" stroke="#8a8a8a" stroke-width="0.8"/>
<!-- left arm -->
<polygon points="909,454.1 1008,407 1010,419 973.7,449.4 940.8,462.3 947,467.4 954.9,483.9 958,493.3 958,506 945,512 938,495 932.9,473.7 931.3,470.5 915.7,467.6 910.2,466.6" fill="#0d0d0d"/>
<polygon points="1004,409 1010,407 1013,418 1006,420" fill="#777"/>
<circle cx="961.5" cy="447.5" r="1.5" fill="#aaa"/>
<circle cx="915.8" cy="464.6" r="0.9" fill="#999"/><circle cx="925.8" cy="466.2" r="0.9" fill="#999"/>
<!-- left front wheel -->
<path d="M896.4 474.7 L909.2 471.3 L930.7 474.7 Q940 482 943.5 497.2 L942.5 536.4 Q937 546 928.8 549.1 L899.4 545.2 L884.7 532.5 L879.8 510.9 L884.7 488.4 Z" fill="#333333"/>
<ellipse cx="930.7" cy="513.4" rx="12.7" ry="23.5" transform="rotate(-6 930.7 513.4)" fill="#0a0a0a"/>
<ellipse cx="929" cy="513.4" rx="8.5" ry="15" transform="rotate(-6 929 513.4)" fill="none" stroke="#9a9a9a" stroke-width="1.1"/>
<!-- motor left -->
<polygon points="940.5,507 956.2,506 958,531 940.5,528.6" fill="#dadada"/>
<ellipse cx="958.6" cy="519.7" rx="7.8" ry="11.8" fill="#0a0a0a"/>
<!-- red box -->
<polygon points="1006.3,438 1058,431 1058,434 1032.9,446.6 1007,443" fill="#c41212"/>
<polygon points="1010.2,394.1 1025.9,386.7 1053.3,391.8 1053.3,441 1010.2,441" fill="#cc1a1a"/>
<polygon points="1010.2,394.1 1025.9,386.7 1053.3,391.8 1036.6,401 1010.2,404" fill="#b84646"/>
<polygon points="1010.2,404 1036.6,401 1036.6,420 1010.2,428" fill="#dc4242" opacity="0.85"/>
<polygon points="1036.6,401 1053.3,391.8 1053.3,432 1036.6,441" fill="#a81212"/>
<!-- antenna -->
<rect x="1085" y="401" width="5" height="26" rx="2.5" fill="#0a0a0a"/>
<rect x="1084" y="427" width="7" height="5" fill="#c8e030"/>
<!-- right link -->
<path d="M1092 452 L1120 436" stroke="#111" stroke-width="5" stroke-linecap="round"/>
<polygon points="1117,436 1126,440 1142,460 1132,464" fill="#151515"/>
<!-- right arm -->
<polygon points="1093.4,492.4 1175.3,437.6 1195.2,441.2 1196,446 1192,457 1114,508.8 1093,499" fill="#0d0d0d"/>
<!-- front right wheel -->
<path d="M1075 530 Q1085 515 1100 512 L1125 516 Q1140 525 1143 545 L1141 580 Q1135 595 1120 599 L1090 597 Q1075 588 1072 570 Z" fill="#323232"/>
<ellipse cx="1126.7" cy="558.5" rx="14" ry="26" transform="rotate(-6 1126.7 558.5)" fill="#0a0a0a"/>
<ellipse cx="1133" cy="560" rx="5" ry="9" fill="#8e8e8e"/>
<!-- front right motor -->
<polygon points="1055,533 1069.4,532 1069.4,560 1055,561" fill="#d4d4d4"/>
<ellipse cx="1055" cy="547" rx="3.5" ry="14" fill="#0a0a0a"/>
<path d="M1093 504 L1068 558" stroke="#0e0e0e" stroke-width="6"/>
</g>
</svg>
<svg style="left:0;top:0" width="1660" height="560"><path d="M1628.9 527.8 v12.4 l6.2 -6.2z" fill="#bdbbbc"/><g fill="#8a8889"><rect x="1643" y="527" width="2" height="2"/><rect x="1643" y="530" width="2" height="2"/><rect x="1643" y="533" width="2" height="2"/><rect x="1643" y="536" width="2" height="2"/><rect x="1643" y="539" width="2" height="2"/><rect x="1643" y="542" width="2" height="2"/></g></svg>
<div class="a" style="left:1648px;top:81px;width:272px;height:26px;background:#4a4748"></div>
<div class="t" style="font-size:19px;letter-spacing:0.440px;left:1676px;top:81px">Views</div>
<div class="a" style="left:1901px;top:86px;width:16px;height:16px;border:1px solid #6b686a;border-radius:3px;background:#4a4748"></div>
<svg style="left:0;top:0" width="1920" height="110"><circle cx="1909" cy="93.5" r="5" fill="#d41c26"/><path d="M1907 91.5l4 4M1911 91.5l-4 4" stroke="#fff" stroke-width="1.5"/></svg>
<div class="t" style="font-size:19px;letter-spacing:0.235px;left:1650px;top:117px">Type:</div>
<div class="btn" style="font-size:19px;letter-spacing:0.797px;left:1707px;top:115px;width:122px;height:28px;text-align:left;padding-left:3px;line-height:26px">Orbit (rviz</div>
<svg style="left:0;top:0" width="1920" height="150"><path d="M1807.5 126h11l-5.5 6z" fill="#c4c2c3"/></svg>
<div class="btn" style="font-size:19px;letter-spacing:0.786px;left:1838px;top:114px;width:79px;height:31px;line-height:30px">Zero</div>
<div class="a" style="left:1648px;top:156px;width:269px;height:787px;background:#1e1c1d"></div>
<div class="a" style="left:1649px;top:157px;width:267px;height:786px;background:#3d3b3c"></div>
<div class="a" style="left:1784px;top:157px;width:1px;height:786px;background:#4a4849"></div>
<div class="t b" style="font-size:19px;letter-spacing:1.497px;left:1681px;top:156px;line-height:22px">Current...</div>
<div class="t b" style="font-size:19px;letter-spacing:1.432px;left:1787px;top:156px;line-height:22px">Orbit (rviz)</div>
<div class="t " style="font-size:19px;letter-spacing:0.509px;left:1710px;top:178px;line-height:22px">Near ...</div>
<div class="t " style="font-size:19px;letter-spacing:1.035px;left:1787px;top:178px;line-height:22px">0,01</div>
<div class="t " style="font-size:19px;letter-spacing:0.839px;left:1710px;top:200px;line-height:22px">Invert...</div>
<div class="t " style="font-size:19px;letter-spacing:0.348px;left:1710px;top:222px;line-height:22px">Targe...</div>
<div class="t " style="font-size:19px;letter-spacing:0.410px;left:1787px;top:222px;line-height:22px">&lt;Fixed Fra...</div>
<div class="t " style="font-size:19px;letter-spacing:0.625px;left:1710px;top:244px;line-height:22px">Dista...</div>
<div class="t " style="font-size:19px;letter-spacing:0.961px;left:1787px;top:244px;line-height:22px">1,89693</div>
<div class="t " style="font-size:19px;letter-spacing:0.246px;left:1710px;top:266px;line-height:22px">Focal ...</div>
<div class="t " style="font-size:19px;letter-spacing:1.035px;left:1787px;top:266px;line-height:22px">0,05</div>
<div class="t " style="font-size:19px;letter-spacing:0.246px;left:1710px;top:288px;line-height:22px">Focal ...</div>
<div class="t " style="font-size:19px;letter-spacing:-0.640px;left:1710px;top:310px;line-height:22px">Yaw</div>
<div class="t " style="font-size:19px;letter-spacing:0.950px;left:1787px;top:310px;line-height:22px">0,520397</div>
<div class="t " style="font-size:19px;letter-spacing:0.396px;left:1710px;top:332px;line-height:22px">Pitch</div>
<div class="t " style="font-size:19px;letter-spacing:0.950px;left:1787px;top:332px;line-height:22px">0,415398</div>
<div class="t " style="font-size:19px;letter-spacing:0.246px;left:1710px;top:354px;line-height:22px">Focal ...</div>
<div class="t " style="font-size:19px;letter-spacing:0.853px;left:1787px;top:354px;line-height:22px">0; 0; 0</div>
<svg style="left:0;top:0" width="1920" height="400"><path d="M1658 165 h11 l-5.5 6 z" fill="#c4c2c3"/><path d="M1689 360 v12 l6.5 -6 z" fill="#bdbbbc"/><path d="M1790 300 L1796 308.5 L1803.5 294.5" stroke="#e6e6e6" stroke-width="2.5" fill="none"/></svg>
<div class="cb" style="left:1787px;top:202px;width:20px;height:20px"></div>
<div class="cb" style="left:1787px;top:290px;width:20px;height:20px"></div>
<div class="btn" style="font-size:19px;letter-spacing:0.521px;left:3px;top:951px;width:107px;height:31px;line-height:29px">Add</div>
<div class="btn dis" style="font-size:19px;letter-spacing:0.819px;left:120px;top:951px;width:107px;height:31px;line-height:29px">Duplicate</div>
<div class="btn dis" style="font-size:19px;letter-spacing:0.460px;left:237px;top:951px;width:107px;height:31px;line-height:29px">Remove</div>
<div class="btn dis" style="font-size:19px;letter-spacing:0.402px;left:354px;top:951px;width:107px;height:31px;line-height:29px">Rename</div>
<div class="btn" style="font-size:19px;letter-spacing:0.163px;left:3px;top:991px;width:68px;height:27px;line-height:25px">Reset</div>
<div class="btn" style="font-size:19px;letter-spacing:0.292px;left:1651px;top:953px;width:81px;height:31px;line-height:29px">Save</div>
<div class="btn" style="font-size:19px;letter-spacing:0.460px;left:1742px;top:953px;width:82px;height:31px;line-height:29px">Remove</div>
<div class="btn" style="font-size:19px;letter-spacing:0.402px;left:1834px;top:953px;width:82px;height:31px;line-height:29px">Rename</div>
<div class="t" style="font-size:19px;letter-spacing:0.803px;left:1864px;top:988px">31 fps</div>
</body></html>
